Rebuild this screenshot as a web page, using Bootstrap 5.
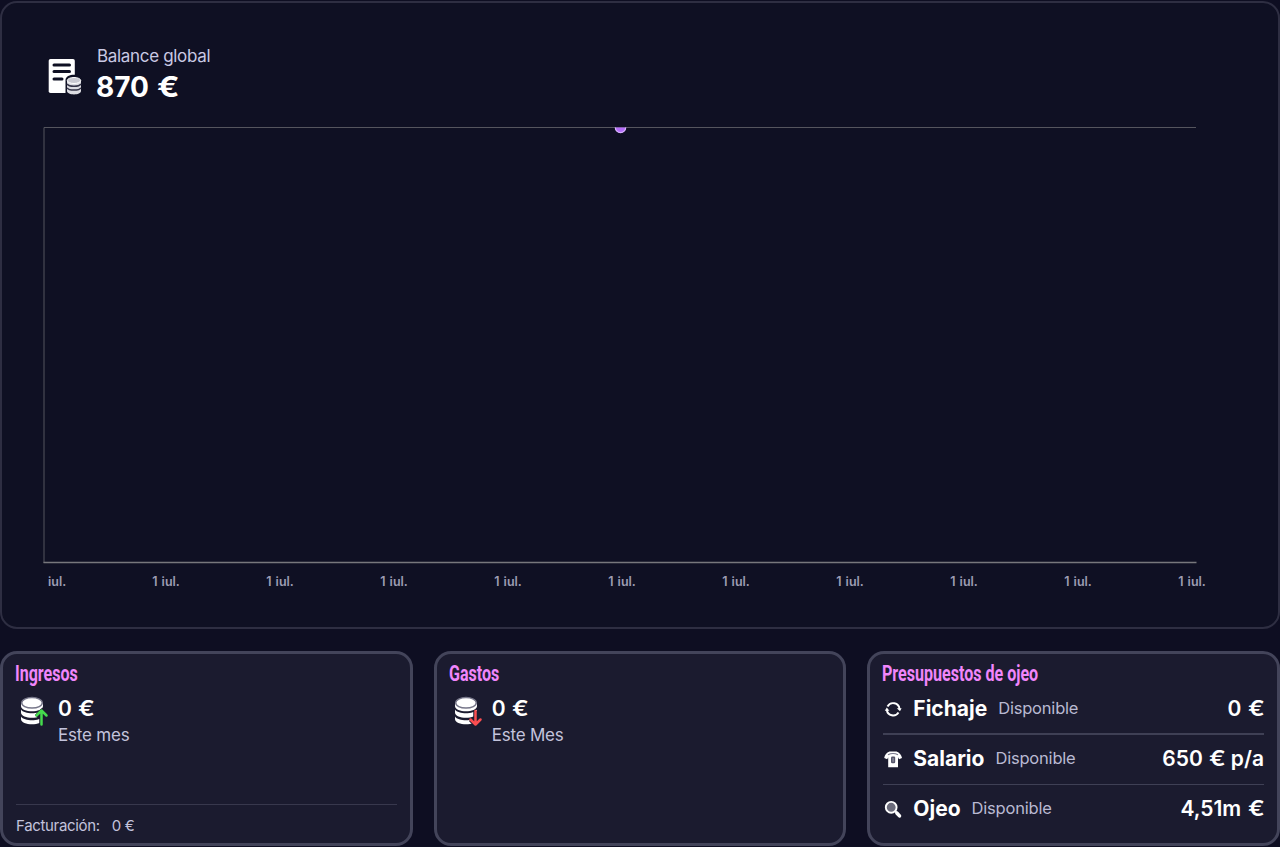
<!DOCTYPE html>
<html lang="es">
  <head>
    <meta charset="UTF-8" />
    <meta name="viewport" content="width=device-width, initial-scale=1.0" />
    <title>Balance global</title>
    <!-- Bootstrap CSS -->
    <link
      href="https://cdn.jsdelivr.net/npm/bootstrap@5.3.0/dist/css/bootstrap.min.css"
      rel="stylesheet"
    />
    <style>
      body {
        background-color: #0e0e22;
        color: #ffffff;
        font-family: Inter, "Liberation Sans", sans-serif;
        height: 847px;
        overflow: hidden;
        padding-top: 1px;
      }

      .balance-panel {
        height: 628px;
        border: 2px solid #2e2e42;
        border-radius: 17px;
        background-color: #0f1023;
        padding: 43px 0 0 41px;
      }

      .report-icon {
        margin: 7px 13px 0 1px;
      }

      .balance-label {
        color: #c9c9e4;
        font-size: 17px;
        line-height: 20px;
        letter-spacing: -0.32px;
      }

      .balance-total {
        font-size: 28px;
        line-height: 34px;
        font-weight: 650;
        margin: 4px 0 0 -1px;
      }

      .euro {
        display: inline-block;
        transform: scaleX(1.18);
        transform-origin: left;
        margin: 0 0.1em 0 0.05em;
      }

      .plot {
        display: block;
        margin-top: 23px;
      }

      .axis-labels {
        padding-top: 9px;
      }

      .axis-tick {
        flex: 0 0 114px;
        text-align: center;
        color: #9c9cb3;
        font-size: 12.5px;
        line-height: 18px;
        font-weight: 600;
        word-spacing: 1px;
      }

      .axis-tick:first-child {
        flex-basis: 66px;
        padding-left: 5px;
        text-align: left;
      }

      .finance-grid {
        display: grid;
        grid-template-columns: repeat(3, 1fr);
        gap: 21px;
        margin-top: 22px;
      }

      .finance-card {
        height: 195px;
        border: 3px solid #43445a;
        border-radius: 17px;
        background-color: #1b1b2f;
        padding: 7px 13px 0;
      }

      .finance-title {
        color: #f086fb;
        font-family: Roboto, sans-serif;
        font-size: 22px;
        line-height: 25px;
        font-weight: 700;
        margin: 0 0 0 -1px;
        white-space: nowrap;
        transform: scaleX(0.73);
        transform-origin: left;
      }

      .amount {
        font-size: 21px;
        line-height: 26px;
        font-weight: 600;
        white-space: nowrap;
      }

      .period {
        color: #c3c3dc;
        font-size: 17px;
        line-height: 22px;
        letter-spacing: -0.2px;
        margin-top: 2px;
      }

      .coin-row {
        padding: 10px 0 0 3px;
        gap: 9px;
      }

      .billing {
        border-top: 1px solid #38384d;
        color: #c3c3dc;
        font-size: 15px;
        line-height: 22px;
        margin-bottom: 6px;
        padding-top: 10px;
        letter-spacing: -0.33px;
      }

      .budget-row {
        height: 50px;
        padding-bottom: 2px;
        border-bottom: 1px solid #3f4055;
      }

      .budget-row:first-of-type {
        height: 49px;
        border-bottom-width: 2px;
      }

      .budget-row:last-child {
        height: 49px;
        border-bottom: 0;
      }

      .budget-name {
        font-size: 21px;
        font-weight: 650;
        margin-left: 10px;
      }

      .budget-note {
        color: #b9b9d2;
        font-size: 16.5px;
        letter-spacing: -0.2px;
        margin-left: 11px;
      }
    </style>
  </head>
  <body>
    <!-- Global balance -->
    <section class="balance-panel">
      <div class="d-flex">
        <svg class="report-icon" width="40" height="44" viewBox="0 0 40 44">
          <path d="M6.500 6H29a1.800 1.800 0 0 1 1.800 1.800V40H6.500a1.800 1.800 0 0 1-1.800-1.800V7.800A1.800 1.800 0 0 1 6.500 6Z" fill="#fff" />
          <path d="M10 12h15.500M10 18.500h15.500M10 26h8" stroke="#0f1023" stroke-width="3" stroke-linecap="round" />
          <path d="M21.500 27c0-7 17-7 17 0v13h-17Z" fill="#0f1023" />
          <path d="M23 27.500v10.500c0 4.500 14 4.500 14 0V27.500Z" fill="#dcdce2" />
          <ellipse cx="30" cy="27.500" rx="6.700" ry="3" fill="#c9c9d1" stroke="#fff" />
          <path d="M23 31c2 3 12 3 14 0M23 34.800c2 3 12 3 14 0" fill="none" stroke="#353548" stroke-width="1.400" />
        </svg>
        <div>
          <div class="balance-label">Balance global</div>
          <div class="balance-total">870 <span class="euro">€</span></div>
        </div>
      </div>

      <svg class="plot" width="1154" height="437" viewBox="0 0 1154 437">
        <path d="M1 436V.500H1153" fill="none" stroke="#55555e" />
        <path d="M.500 435.500H1153.500" stroke="#77777c" stroke-width="1.500" />
        <path d="M572.300 .500a5.200 5.200 0 0 0 10.400 0" fill="#b46dfa" stroke="#dab4ff" stroke-width="1.200" />
      </svg>
      <div class="axis-labels d-flex">
        <div class="axis-tick">iul.</div>
        <div class="axis-tick">1 iul.</div>
        <div class="axis-tick">1 iul.</div>
        <div class="axis-tick">1 iul.</div>
        <div class="axis-tick">1 iul.</div>
        <div class="axis-tick">1 iul.</div>
        <div class="axis-tick">1 iul.</div>
        <div class="axis-tick">1 iul.</div>
        <div class="axis-tick">1 iul.</div>
        <div class="axis-tick">1 iul.</div>
        <div class="axis-tick">1 iul.</div>
      </div>
    </section>

    <div class="finance-grid">
      <!-- Income -->
      <section class="finance-card d-flex flex-column">
        <h2 class="finance-title">Ingresos</h2>
        <div class="coin-row d-flex">
          <svg width="30" height="34" viewBox="0 0 30 34">
            <path d="M2 7v3c0 7 22 7 22 0V7ZM2 13.500v3c0 7 22 7 22 0v-3c-3 5-19 5-22 0ZM2 20.500v2.500c0 7 22 7 22 0v-2.500c-3 5-19 5-22 0Z" fill="#fff" />
            <ellipse cx="13" cy="6.800" rx="10.300" ry="5.300" fill="#fff" stroke="#77778a" stroke-width="1.500" />
            <path d="M22.500 28V16M17.500 20.500l5-5 5 5" fill="none" stroke="#1b1b2f" stroke-width="4.500" />
            <path d="M22.500 28.500V15M17.500 19.500l5-5 5 5" fill="none" stroke="#45db4d" stroke-width="2.500" stroke-linecap="round" stroke-linejoin="round" />
          </svg>
          <div>
            <div class="amount">0 <span class="euro">€</span></div>
            <div class="period">Este mes</div>
          </div>
        </div>
        <div class="billing mt-auto">Facturación: <span class="ms-2">0 €</span></div>
      </section>

      <!-- Expenses -->
      <section class="finance-card">
        <h2 class="finance-title">Gastos</h2>
        <div class="coin-row d-flex">
          <svg width="30" height="34" viewBox="0 0 30 34">
            <path d="M2 7v3c0 7 22 7 22 0V7ZM2 13.500v3c0 7 22 7 22 0v-3c-3 5-19 5-22 0ZM2 20.500v2.500c0 7 22 7 22 0v-2.500c-3 5-19 5-22 0Z" fill="#fff" />
            <ellipse cx="13" cy="6.800" rx="10.300" ry="5.300" fill="#fff" stroke="#77778a" stroke-width="1.500" />
            <path d="M22.500 15V28M17.500 23.500l5 5 5-5" fill="none" stroke="#1b1b2f" stroke-width="4.500" />
            <path d="M22.500 15V28M17.500 23.500l5 5 5-5" fill="none" stroke="#fa4d50" stroke-width="2.500" stroke-linecap="round" stroke-linejoin="round" />
          </svg>
          <div>
            <div class="amount">0 <span class="euro">€</span></div>
            <div class="period">Este Mes</div>
          </div>
        </div>
      </section>

      <!-- Scouting budgets -->
      <section class="finance-card">
        <h2 class="finance-title">Presupuestos de ojeo</h2>
        <div class="budget-row d-flex align-items-center">
          <svg width="20" height="20" viewBox="0 0 20 20">
            <path d="M4.500 7.500a6.400 6.400 0 0 1 12 2.500M15.500 13.500A6.400 6.400 0 0 1 3.800 11" fill="none" stroke="#fff" stroke-width="1.900" />
            <path d="M13.800 9.200h4.800l-1.600 3ZM1.800 11.800h4.600L3.800 8.600Z" fill="#fff" />
          </svg>
          <span class="budget-name">Fichaje</span>
          <span class="budget-note">Disponible</span>
          <span class="amount ms-auto">0 <span class="euro">€</span></span>
        </div>
        <div class="budget-row d-flex align-items-center">
          <svg width="20" height="20" viewBox="0 0 20 20">
            <path d="M6.500 2.500h7Q18 4 19 9l-3 1.200-1-2V18.300H5.200V8.200l-1 2L1.200 9Q2 4 6.500 2.500Z" fill="#fff" />
            <path d="M5 5.800Q10 3.200 15 5.800" fill="none" stroke="#77778a" stroke-width="1.200" />
            <rect x="8" y="7.500" width="4.200" height="6.800" rx="1.200" fill="#55556a" />
            <path d="M10.100 9v3.800" stroke="#9c9caa" stroke-width="1" />
          </svg>
          <span class="budget-name">Salario</span>
          <span class="budget-note">Disponible</span>
          <span class="amount ms-auto">650 <span class="euro">€</span> p/a</span>
        </div>
        <div class="budget-row d-flex align-items-center">
          <svg width="20" height="20" viewBox="0 0 20 20">
            <circle cx="8.200" cy="8.300" r="5.400" fill="#6c6c7c" stroke="#fff" stroke-width="1.900" />
            <path d="M12.200 12.300l2 2" stroke="#fff" stroke-width="2.200" />
            <path d="M14 14.200l2.500 2.700" stroke="#fff" stroke-width="3.600" stroke-linecap="round" />
          </svg>
          <span class="budget-name">Ojeo</span>
          <span class="budget-note">Disponible</span>
          <span class="amount ms-auto">4,51m <span class="euro">€</span></span>
        </div>
      </section>
    </div>

    <!-- Bootstrap JS -->
    <script src="https://cdn.jsdelivr.net/npm/bootstrap@5.3.0/dist/js/bootstrap.bundle.min.js"></script>
  </body>
</html>
